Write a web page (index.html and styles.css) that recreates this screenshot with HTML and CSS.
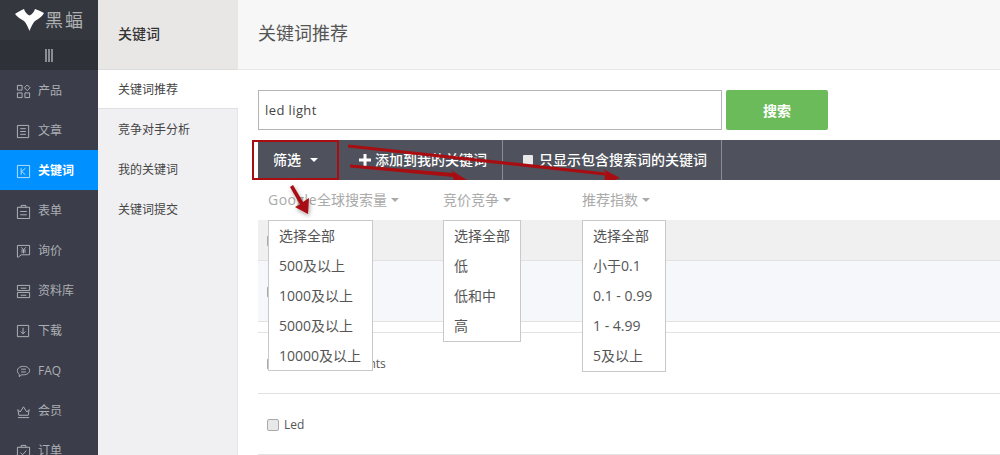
FILE: index.html
```html
<!DOCTYPE html>
<html lang="zh-CN">
<head>
<meta charset="utf-8">
<title>关键词推荐</title>
<link rel="stylesheet" href="styles.css">
</head>
<body>
<div class="app">
  <aside class="side">
    <div class="logo">
      <svg class="bat" width="29" height="22" viewBox="0 0 29 22"><path d="M0 5 C3 3 6 1 9 0 C10 3 12 5.500 14.500 6.500 C17 5.500 19 3 20 0 C23 1 26 2.500 29 4 C27 8 23 10 20 12 C18 14 16 18 14.500 22 C13 18 11 14 9 12 C6 10 2 8 0 5Z" fill="#fff"/></svg>
      <span class="logo-text">黑蝠</span>
    </div>
    <div class="toggle"><span></span><span></span><span></span></div>
    <nav class="nav">
      <a class="nav-item"><svg viewBox="0 0 16 16"><path d="M1.500 1.500h5v5h-5zM1.500 9.500h5v5h-5zM9.500 9.500h5v5h-5zM12 1l3 3-3 3-3-3z"/></svg><span>产品</span></a>
      <a class="nav-item"><svg viewBox="0 0 16 16"><path d="M1.500 1.500h12v13h-12zM4.500 5h6M4.500 8h6M4.500 11h6"/></svg><span>文章</span></a>
      <a class="nav-item active"><svg viewBox="0 0 16 16"><path d="M1.500 1.500h13v13h-13zM5.500 4.500v7M10 4.500 6 8l4 3.500"/></svg><span>关键词</span></a>
      <a class="nav-item"><svg viewBox="0 0 16 16"><path d="M1.500 3.500h13v12h-13zM5.500 3.500v-2h5v2M4.500 8h7M4.500 11.500h7"/></svg><span>表单</span></a>
      <a class="nav-item"><svg viewBox="0 0 16 16"><path d="M1.500 1.500h13v10h-9l-3 2.500h-1zM5.500 3.500 8 6l2.500-2.500M8 6v4M5.500 6.500h5M5.500 8.500h5"/></svg><span>询价</span></a>
      <a class="nav-item"><svg viewBox="0 0 16 16"><path d="M1.500 1.500h13v5.500h-13zM1.500 9h13v5.500h-13zM5 4.500h6M5 12h6"/></svg><span>资料库</span></a>
      <a class="nav-item"><svg viewBox="0 0 16 16"><path d="M1.500 1.500h12v12h-12zM7.500 4v6.500M5 8l2.500 2.500L10 8"/></svg><span>下载</span></a>
      <a class="nav-item"><svg viewBox="0 0 16 16"><path d="M8 2.500c3.500 0 6.500 1.800 6.500 4.500S11.500 11.500 8 11.500H6L3.500 13.500V11C2 10 1.500 8.500 1.500 7 1.500 4.300 4.500 2.500 8 2.500zM5.500 5.500h5M5.500 8.500h5"/></svg><span>FAQ</span></a>
      <a class="nav-item"><svg viewBox="0 0 16 16"><path d="M2 6l2.500 2.500L8 3l3.500 5.500L14 6l-1 6H3zM2 14.500h12"/></svg><span>会员</span></a>
      <a class="nav-item"><svg viewBox="0 0 16 16"><path d="M1.500 3.500h13v12h-13zM5.500 3.500v-2h5v2M4.500 9l2.500 2.500 4-4.500"/></svg><span>订单</span></a>
    </nav>
  </aside>

  <aside class="sub">
    <div class="sub-head">关键词</div>
    <a class="sub-item current">关键词推荐</a>
    <a class="sub-item">竞争对手分析</a>
    <a class="sub-item">我的关键词</a>
    <a class="sub-item">关键词提交</a>
  </aside>

  <main class="main">
    <header class="main-head">关键词推荐</header>
    <div class="search">
      <div class="search-input">led light</div>
      <button class="search-btn">搜索</button>
    </div>
    <div class="toolbar">
      <div class="tool tool-filter">筛选<i class="caret caret-white"></i></div>
      <div class="tool tool-add"><svg width="12" height="12" viewBox="0 0 12 12"><path d="M4.500 0h3v4.500H12v3H7.500V12h-3V7.500H0v-3h4.500z" fill="#fff"/></svg>添加到我的关键词</div>
      <div class="tool tool-only"><i class="tool-check"></i>只显示包含搜索词的关键词</div>
    </div>
    <div class="filters">
      <div class="filter f1"><span class="latin">Google</span>全球搜索量<i class="caret"></i></div>
      <div class="filter f2">竞价竞争<i class="caret"></i></div>
      <div class="filter f3">推荐指数<i class="caret"></i></div>
    </div>
    <div class="table">
      <div class="row row-head"><i class="check"></i></div>
      <div class="row row-shaded"><i class="check"></i></div>
      <div class="row row-gap"></div>
      <div class="row"><i class="check"></i><span>led light segments</span></div>
      <div class="row"><i class="check"></i><span>Led</span></div>
    </div>
  </main>
</div>

<ul class="menu m1">
  <li>选择全部</li><li>500及以上</li><li>1000及以上</li><li>5000及以上</li><li>10000及以上</li>
</ul>
<ul class="menu m2">
  <li>选择全部</li><li>低</li><li>低和中</li><li>高</li>
</ul>
<ul class="menu m3">
  <li>选择全部</li><li>小于0.1</li><li>0.1 - 0.99</li><li>1 - 4.99</li><li>5及以上</li>
</ul>

<div class="redbox"></div>
<svg class="arrows" width="1000" height="455" viewBox="0 0 1000 455">
  <defs>
    <filter id="sh" x="-30%" y="-30%" width="170%" height="170%"><feDropShadow dx="1" dy="2" stdDeviation="2" flood-color="#000" flood-opacity=".35"/></filter>
    <clipPath id="bar"><rect x="258" y="140" width="742" height="40"/></clipPath>
  </defs>
  <g filter="url(#sh)">
    <path d="M290 187 L293 185 L303 202 L309 198 L308 214 L295 207 L300 204.500Z" fill="#a80d12"/>
  </g>
  <g clip-path="url(#bar)" fill="#a80d12">
    <path d="M350 164.500 L453 173 L451 170 L467 180 L455 186 L453 177 L350 167.500Z"/>
    <path d="M348 144.500 L606 172.500 L603 169 L620 178 L604 184 L605 175.500 L348 147.500Z"/>
  </g>
</svg>
</body>
</html>
```

FILE: styles.css
```css
* { box-sizing: border-box; }
html, body { margin: 0; padding: 0; height: 455px; overflow: hidden; background: #fff; }
body { position: relative; font-family: "Open Sans", "Noto Sans CJK SC", sans-serif; font-size: 13px; line-height: 1.3; color: #444; }
ul { list-style: none; margin: 0; padding: 0; }
i { font-style: normal; display: block; }

.app { display: flex; height: 455px; }

.side { width: 98px; flex: none; background: #3b3e4a; overflow: hidden; }
.logo { height: 40px; background: #34373e; display: flex; align-items: center; padding: 0 0 1px 15px; gap: 1px; }
.logo-text { font-size: 18px; color: #aeb0b2; letter-spacing: 2px; line-height: 1; }
.bat { flex: none; }
.toggle { height: 30px; background: #2e3138; display: flex; justify-content: center; align-items: center; gap: 1px; }
.toggle span { width: 2px; height: 13px; background: #8b8d94; }
.nav-item { height: 40px; display: flex; align-items: center; padding: 2px 0 0 16px; gap: 7px; color: #acaeb3; font-size: 12px; }
.nav-item svg { width: 15px; height: 15px; flex: none; fill: none; stroke: #b5b7bb; stroke-width: 1; }
.nav-item.active { background: #0090ff; color: #fff; font-weight: 700; }
.nav-item.active svg { stroke: #bfe3ff; }

.sub { width: 140px; flex: none; background: #f0f0f2; border-right: 1px solid #e6e6e8; }
.sub-head { height: 70px; background: #e9e7e6; border-bottom: 1px solid #dcdcdc; display: flex; align-items: center; padding: 0 0 1px 20px; color: #333; font-size: 14px; font-weight: 500; }
.sub-item { height: 40px; display: flex; align-items: center; padding: 1px 0 0 20px; color: #444; font-size: 12px; }
.sub-item.current { height: 39px; background: #fff; border-bottom: 1px solid #e0e0e2; margin-right: -1px; }

.main { flex: 1; min-width: 0; }
.main-head { height: 70px; background: #f7f7f7; border-bottom: 1px solid #e8e8e8; display: flex; align-items: center; padding: 0 0 1px 20px; font-size: 18px; color: #555; }
.search { display: flex; padding: 20px 0 0 20px; gap: 4px; height: 70px; }
.search-input { width: 464px; height: 40px; border: 1px solid #b5b5b5; display: flex; align-items: center; padding-left: 6px; font-size: 13px; letter-spacing: .4px; color: #444; }
.search-btn { width: 102px; height: 40px; border: 0; border-radius: 2px; background: #6cbb5a; color: #fff; font: 700 14px "Noto Sans CJK SC", sans-serif; }

.toolbar { margin-left: 20px; height: 40px; background: #4f525c; display: flex; color: #fff; font-size: 14px; font-weight: 500; }
.tool { display: flex; align-items: center; height: 40px; white-space: nowrap; }
.tool-filter { width: 81px; padding-left: 15px; }
.tool-add { width: 164px; padding-left: 20px; border-right: 1px solid #8a8c93; gap: 4px; }
.tool-only { width: 219px; padding-left: 20px; border-right: 1px solid #8a8c93; gap: 6px; }
.tool-check { width: 10px; height: 10px; background: #e8e8e8; border-radius: 1px; }
.caret { width: 0; height: 0; border: 4.500px solid transparent; border-top-color: #aaa; border-bottom: 0; margin-left: 4px; }
.caret-white { border-top-color: #fff; margin-left: 9px; }

.filters { margin-left: 20px; height: 40px; display: flex; align-items: center; color: #aaa; font-size: 14px; }
.filter { display: flex; align-items: center; white-space: nowrap; }
.latin { letter-spacing: .5px; }
.f1 { width: 185px; padding-left: 10px; }
.f2 { width: 139px; }
.f3 { width: 160px; }

.table { margin-left: 20px; }
.row { height: 61px; border-bottom: 1px solid #e2e2e2; display: flex; align-items: center; padding: 1px 0 0 9px; gap: 5px; font-size: 12px; color: #555; }
.row-head { height: 41px; background: #f0f0f0; }
.row-shaded { height: 61px; background: #f5f7fb; }
.row-gap { height: 11px; }
.check { width: 12px; height: 12px; flex: none; border: 1px solid #aaa; border-radius: 2px; background: #e8e8e8; }

.menu { position: absolute; top: 220px; background: #fff; border: 1px solid #c9c9c9; padding: 0 10px; font-size: 14px; color: #555; white-space: nowrap; }
.menu li { height: 30px; line-height: 29px; }
.m1 { left: 268px; width: 105px; height: 151px; }
.m2 { left: 443px; width: 78px; height: 122px; }
.m3 { left: 582px; width: 84px; height: 152px; }

.redbox { position: absolute; left: 252px; top: 140px; width: 87px; height: 40px; border: 2px solid #a80d12; }
.arrows { position: absolute; left: 0; top: 0; pointer-events: none; }
```
